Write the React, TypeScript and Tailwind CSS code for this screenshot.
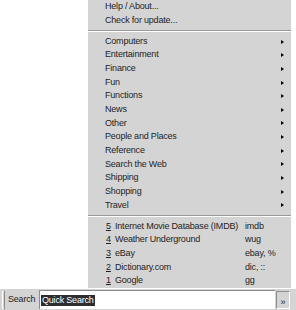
import { ReactNode } from "react"

const categories = [
    "Computers",
    "Entertainment",
    "Finance",
    "Fun",
    "Functions",
    "News",
    "Other",
    "People and Places",
    "Reference",
    "Search the Web",
    "Shipping",
    "Shopping",
    "Travel",
]

const engines = [
    { key: "5", name: "Internet Movie Database (IMDB)", alias: "imdb" },
    { key: "4", name: "Weather Underground", alias: "wug" },
    { key: "3", name: "eBay", alias: "ebay, %" },
    { key: "2", name: "Dictionary.com", alias: "dic, ::" },
    { key: "1", name: "Google", alias: "gg" },
]

function Row({ children }: { children: ReactNode }) {
    return <div className="relative flex items-center h-[13.67px] shrink-0">{children}</div>
}

function Separator() {
    return (
        <div className="flex flex-col justify-center h-[7.4px] shrink-0">
            <div className="h-px bg-[#9a9a9a]" />
            <div className="h-px bg-white" />
        </div>
    )
}

export default function App() {
    return (
        <div
            className="w-[296px] h-[310px] bg-white flex flex-col overflow-hidden text-[9px] text-[#1e1e1e] tracking-[-0.2px]"
            style={{ fontFamily: '"Liberation Sans", Arial, sans-serif' }}
        >
            {/* popup menu */}
            <div className="ml-[88px] w-[203px] h-[288px] bg-[#d4d4d4] flex flex-col shrink-0">
                <Row><span className="pl-[17px]">Help / About...</span></Row>
                <Row><span className="pl-[17px]">Check for update...</span></Row>
                <Separator />
                {categories.map((c) => (
                    <Row key={c}>
                        <span className="pl-[17px]">{c}</span>
                        <span className="absolute right-[7px] top-1/2 -translate-y-1/2 w-0 h-0 border-y-[2.5px] border-y-transparent border-l-[3px] border-l-black" />
                    </Row>
                ))}
                <Separator />
                {engines.map((e) => (
                    <Row key={e.key}>
                        <span className="pl-[18px] w-[27px] underline underline-offset-1">{e.key}</span>
                        <span className="w-[130px]">{e.name}</span>
                        <span>{e.alias}</span>
                    </Row>
                ))}
            </div>

            {/* search toolbar */}
            <div className="flex items-center h-[22px] bg-[#d4d4d4] border-t border-white">
                <div className="ml-[2px] w-[3px] h-[18px] border-l border-white border-r border-r-[#8c8c8c] bg-[#d4d4d4]" />
                <span className="ml-[3px] w-[31px]">Search</span>
                <div className="flex items-center w-[236px] h-[19px] bg-white border-t border-l border-[#8c8c8c]">
                    <span className="ml-[1px] px-[1px] bg-[#2e2e2e] text-white leading-[11px]">Quick Search</span>
                </div>
                <div className="ml-[1px] w-[14px] h-[18px] flex items-end justify-center pb-[1px] border-t border-l border-[#8c8c8c] border-r border-b border-r-white border-b-white text-[9px] leading-none">
                    »
                </div>
            </div>
        </div>
    )
}
